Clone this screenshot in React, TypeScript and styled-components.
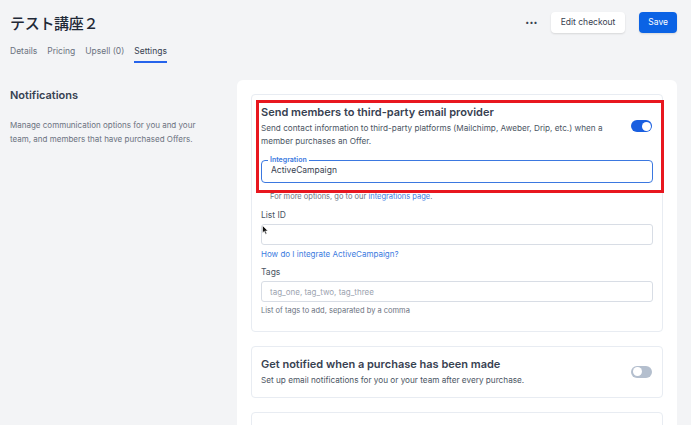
import { createGlobalStyle, styled } from "styled-components";

const GlobalStyle = createGlobalStyle`
  html, body {
    margin: 0;
    padding: 0;
    overflow: hidden;
    background: #f3f4f6;
    font-family: Inter, "Noto Sans", "Noto Sans CJK JP", sans-serif;
    color: #1f2937;
  }
  * { box-sizing: border-box; }
`;

const Page = styled.div`
  padding: 0 14px 0 10px;
  height: 425px;
  overflow: hidden;
`;

const Header = styled.div`
  display: flex;
  align-items: center;
  justify-content: space-between;
  padding-top: 11px;
  height: 33px;
`;

const Title = styled.h1`
  margin: 0;
  font-family: "Noto Sans CJK JP", Inter, sans-serif;
  font-size: 15px;
  font-weight: 500;
  color: #1f2937;
  letter-spacing: -0.3px;
`;

const Actions = styled.div`
  display: flex;
  align-items: center;
`;

const More = styled.span`
  font-size: 7px;
  color: #374151;
  letter-spacing: 0.2px;
  margin-right: 13px;
  line-height: 1;
`;

const Button = styled.button<{ $primary?: boolean }>`
  font-family: Inter, sans-serif;
  font-size: 8.5px;
  height: 21px;
  padding: 0 ${({ $primary }) => ($primary ? "9px" : "10px")};
  border-radius: 4px;
  border: none;
  margin-left: ${({ $primary }) => ($primary ? "14px" : "0")};
  background: ${({ $primary }) => ($primary ? "#0b63e5" : "#ffffff")};
  color: ${({ $primary }) => ($primary ? "#ffffff" : "#374151")};
  box-shadow: 0 1px 2px rgba(0, 0, 0, 0.12);
`;

const Tabs = styled.div`
  display: flex;
  gap: 10px;
  margin-top: 9px;
`;

const Tab = styled.div<{ $active?: boolean }>`
  font-size: 8.5px;
  color: ${({ $active }) => ($active ? "#374151" : "#6b7280")};
  padding: 4px 0 5px;
  border-bottom: 2px solid ${({ $active }) => ($active ? "#2563eb" : "transparent")};
`;

const Main = styled.div`
  display: grid;
  grid-template-columns: 227px 1fr;
  margin-top: 17px;
`;

const Side = styled.div`
  padding-top: 7px;
`;

const SideTitle = styled.h2`
  margin: 0;
  font-size: 11px;
  font-weight: 600;
  color: #374151;
  line-height: 16px;
`;

const SideText = styled.p`
  margin: 15px 0 0;
  font-size: 8px;
  line-height: 14px;
  color: #6b7280;
  width: 205px;
`;

const Panel = styled.div`
  background: #ffffff;
  border-radius: 6px;
  padding: 14px;
  display: flex;
  flex-direction: column;
  gap: 14px;
  min-height: 400px;
`;

const Card = styled.div`
  position: relative;
  border: 1px solid #e8ecf2;
  border-radius: 4px;
  padding: 9px 9px 14px;
`;

const Highlight = styled.div`
  position: absolute;
  top: 5px;
  left: 4px;
  right: -2px;
  height: 93px;
  border: 3px solid #e8171f;
  pointer-events: none;
`;

const Row = styled.div`
  display: flex;
  align-items: center;
  justify-content: space-between;
`;

const CardTitle = styled.div`
  font-size: 11px;
  font-weight: 600;
  color: #374151;
  line-height: 16px;
`;

const CardText = styled.div`
  font-size: 8.2px;
  line-height: 13px;
  color: #4b5563;
  max-width: 355px;
  margin-top: 2px;
`;

const Toggle = styled.div<{ $on?: boolean }>`
  flex: none;
  width: 21px;
  height: 12px;
  border-radius: 6px;
  background: ${({ $on }) => ($on ? "#1a5fe0" : "#b4bfce")};
  display: flex;
  align-items: center;
  justify-content: ${({ $on }) => ($on ? "flex-end" : "flex-start")};
  padding: 0 1.5px;
  margin-right: 1px;

  &::after {
    content: "";
    width: 9px;
    height: 9px;
    border-radius: 50%;
    background: #ffffff;
  }
`;

const Fieldset = styled.fieldset`
  margin: 8px 0 0;
  border: 1px solid #3b78e0;
  border-radius: 4px;
  padding: 0 9px 4px;
  height: 27px;
`;

const Legend = styled.legend`
  font-size: 7px;
  font-weight: 600;
  color: #3b78e0;
  padding: 0 2px;
  margin-left: -3px;
  line-height: 8px;
`;

const FieldValue = styled.div`
  font-size: 8.5px;
  color: #374151;
  line-height: 12px;
`;

const Hint = styled.div<{ $indent?: boolean }>`
  font-size: 7.5px;
  color: #6b7280;
  line-height: 12px;
  padding-left: ${({ $indent }) => ($indent ? "9px" : "0")};
  margin-top: ${({ $indent }) => ($indent ? "8px" : "3px")};
`;

const Link = styled.span`
  color: #3b7be0;
`;

const Label = styled.div`
  font-size: 8.5px;
  color: #4b5563;
  line-height: 12px;
  margin-top: 6px;
`;

const Input = styled.div`
  height: 21px;
  margin-top: 3px;
  border: 1px solid #d8dde5;
  border-radius: 3px;
  font-size: 8px;
  color: #9ca3af;
  display: flex;
  align-items: center;
  padding: 0 8px;
`;

const HelpLink = styled.div`
  font-size: 8px;
  color: #3b7be0;
  line-height: 12px;
  margin-top: 3px;
`;

const SmallCard = styled(Card)`
  padding: 9px 9px 10px;
`;

const Cursor = () => (
  <svg width="7" height="10" viewBox="0 0 7 10" style={{ position: "absolute", left: 10, top: 130 }}>
    <path d="M0.5 0.5 L0.5 8 L2.3 6.3 L3.6 9.3 L4.8 8.8 L3.6 5.9 L6 5.9 Z" fill="#111" stroke="#fff" strokeWidth="0.6" />
  </svg>
);

export default function App() {
  return (
    <Page>
      <GlobalStyle />
      <Header>
        <Title>テスト講座２</Title>
        <Actions>
          <More>•••</More>
          <Button>Edit checkout</Button>
          <Button $primary>Save</Button>
        </Actions>
      </Header>
      <Tabs>
        <Tab>Details</Tab>
        <Tab>Pricing</Tab>
        <Tab>Upsell (0)</Tab>
        <Tab $active>Settings</Tab>
      </Tabs>
      <Main>
        <Side>
          <SideTitle>Notifications</SideTitle>
          <SideText>
            Manage communication options for you and your team, and members that have purchased Offers.
          </SideText>
        </Side>
        <Panel>
          <Card>
            <Row>
              <div>
                <CardTitle>Send members to third-party email provider</CardTitle>
                <CardText>
                  Send contact information to third-party platforms (Mailchimp, Aweber, Drip, etc.) when a
                  member purchases an Offer.
                </CardText>
              </div>
              <Toggle $on />
            </Row>
            <Fieldset>
              <Legend>Integration</Legend>
              <FieldValue>ActiveCampaign</FieldValue>
            </Fieldset>
            <Hint $indent>
              For more options, go to our <Link>integrations page</Link>.
            </Hint>
            <Label>List ID</Label>
            <Input />
            <HelpLink>How do I integrate ActiveCampaign?</HelpLink>
            <Label>Tags</Label>
            <Input>tag_one, tag_two, tag_three</Input>
            <Hint>List of tags to add, separated by a comma</Hint>
            <Cursor />
            <Highlight />
          </Card>
          <SmallCard>
            <Row>
              <div>
                <CardTitle>Get notified when a purchase has been made</CardTitle>
                <CardText>Set up email notifications for you or your team after every purchase.</CardText>
              </div>
              <Toggle />
            </Row>
          </SmallCard>
          <SmallCard>
            <Row>
              <div>
                <CardTitle>Send members a welcome email after purchase</CardTitle>
                <CardText>Customize the email that members receive after they buy this Offer.</CardText>
              </div>
              <Toggle />
            </Row>
          </SmallCard>
        </Panel>
      </Main>
    </Page>
  );
}
